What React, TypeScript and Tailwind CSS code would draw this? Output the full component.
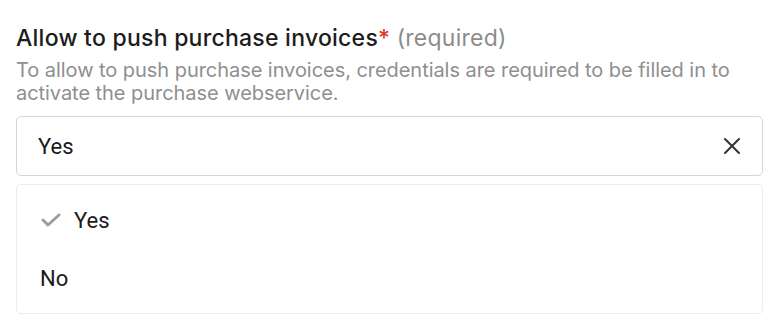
import React from "react";

export default function App() {
  return (
    <div className="w-[778px] h-[328px] bg-white px-4 pt-[23px]" style={{ fontFamily: "Inter, sans-serif" }}>
      <div className="text-[23px] leading-[30px] font-medium text-[#1c1c1c] tracking-[0.25px] whitespace-nowrap">
        Allow to push purchase invoices<span className="text-[#e0352b]">*</span>{" "}
        <span className="font-normal text-[#8c8c8c]">(required)</span>
      </div>
      <p className="mt-[6px] text-[20px] leading-[23px] text-[#8f8f8f] w-[730px] tracking-[-0.05px]">
        To allow to push purchase invoices, credentials are required to be filled in to activate the purchase webservice.
      </p>
      <div
        className="mt-[11px] h-[60px] w-[747px] rounded-[5px] border border-[#d6d6d6] flex items-center pl-[21px] pr-[21px] justify-between"
        style={{ fontFamily: "Roboto, sans-serif" }}
      >
        <span className="text-[22px] text-[#1a1a1a]">Yes</span>
        <svg width="18" height="18" viewBox="0 0 18 18" fill="none" stroke="#333" strokeWidth="2" strokeLinecap="round">
          <path d="M2 2 L16 16 M16 2 L2 16" />
        </svg>
      </div>
      <div
        className="mt-[8px] w-[747px] rounded-[5px] border border-[#ebebeb] py-[6px]"
        style={{ fontFamily: "Roboto, sans-serif" }}
      >
        <div className="h-[58px] flex items-center pl-[24px]">
          <svg width="20" height="16" viewBox="0 0 20 16" fill="none" stroke="#9e9e9e" strokeWidth="3" strokeLinecap="round" strokeLinejoin="round">
            <path d="M2 8 L7 13 L18 3" />
          </svg>
          <span className="ml-[13px] text-[22px] text-[#1a1a1a]">Yes</span>
        </div>
        <div className="h-[58px] flex items-center pl-[23px]">
          <span className="text-[22px] text-[#1a1a1a]">No</span>
        </div>
      </div>
    </div>
  );
}
